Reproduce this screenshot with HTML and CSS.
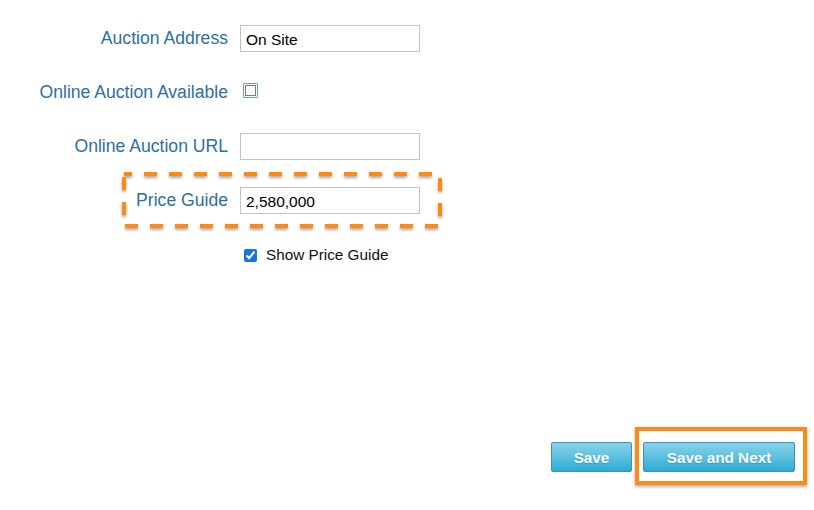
FILE: index.html
```html
<!DOCTYPE html>
<html lang="en">
<head>
<meta charset="utf-8">
<title>Auction Details</title>
<link rel="stylesheet" href="styles.css">
</head>
<body>
<form class="page">
  <div class="rows">
    <div class="row">
      <label class="label" for="addr">Auction Address</label>
      <input class="field" id="addr" type="text" value="On Site">
    </div>
    <div class="row">
      <label class="label" for="online">Online Auction Available</label>
      <input class="check-empty" id="online" type="checkbox">
    </div>
    <div class="row">
      <label class="label" for="url">Online Auction URL</label>
      <input class="field" id="url" type="text" value="">
    </div>
    <div class="row row-highlight">
      <label class="label" for="price">Price Guide</label>
      <input class="field" id="price" type="text" value="2,580,000">
      <svg class="dash-box" width="320" height="56" viewBox="0 0 320 56" aria-hidden="true">
        <rect x="2" y="2" width="316" height="52" fill="none" stroke="#fd8a14" stroke-width="4" stroke-dasharray="13 12" stroke-dashoffset="5"/>
      </svg>
    </div>
    <div class="row">
      <span class="label"></span>
      <label class="check-line"><input class="check-on" type="checkbox" checked><span>Show Price Guide</span></label>
    </div>
  </div>
  <div class="actions">
    <button class="btn btn-save" type="button">Save</button>
    <button class="btn btn-next" type="button">Save and Next</button>
  </div>
</form>
</body>
</html>
```
FILE: styles.css
```css
html, body {
  margin: 0;
  padding: 0;
  background: #ffffff;
}

body {
  font-family: "Liberation Sans", Arial, Helvetica, sans-serif;
  width: 814px;
  height: 510px;
  overflow: hidden;
}

.page {
  display: flex;
  flex-direction: column;
  padding-top: 11px;
}

.rows {
  display: flex;
  flex-direction: column;
}

.row {
  display: flex;
  align-items: center;
  height: 54px;
  position: relative;
}

.label {
  width: 228px;
  flex: none;
  text-align: right;
  font-size: 17.6px;
  color: #2c70a3;
  margin-right: 12px;
  white-space: nowrap;
}

.field {
  box-sizing: border-box;
  width: 180px;
  height: 27px;
  margin: 0;
  border: 1px solid #c3c3c3;
  border-radius: 0;
  padding: 3px 5px 0 5px;
  font-family: "Liberation Sans", Arial, sans-serif;
  font-size: 15.5px;
  color: #000;
  background: #fff;
  outline: none;
}

.check-empty {
  appearance: none;
  -webkit-appearance: none;
  box-sizing: border-box;
  width: 15px;
  height: 15px;
  margin: -3px 0 0 3px;
  border: 1px solid #5d9fd6;
  border-radius: 1px;
  background: #fff;
  box-shadow: inset 0 0 0 1px #ffffff, inset 0 0 0 2px #7a7a7a;
}

.check-line {
  display: flex;
  align-items: center;
  font-size: 15.3px;
  color: #111;
  padding-top: 2px;
}

.check-on {
  width: 13px;
  height: 13px;
  margin: 0 9px 0 4px;
  accent-color: #1b72e8;
}

.dash-box {
  position: absolute;
  left: 122px;
  top: -1px;
  overflow: visible;
  filter: drop-shadow(0 2px 1.5px rgba(0, 0, 0, 0.35));
  pointer-events: none;
}

.actions {
  display: flex;
  justify-content: flex-end;
  gap: 11px;
  margin-top: 161px;
  padding-right: 19px;
}

.btn {
  position: relative;
  box-sizing: border-box;
  height: 30px;
  margin: 0;
  padding: 1px 0 0 0;
  border: 1px solid #3f8fb9;
  border-radius: 2px;
  background: linear-gradient(to bottom, #88d2e8 0%, #5cc0de 50%, #2badd3 100%);
  color: #ffffff;
  font-family: "Liberation Sans", Arial, sans-serif;
  font-weight: bold;
  font-size: 15.3px;
  text-shadow: 0 1px 1px rgba(0, 60, 100, 0.25);
}

.btn-save {
  width: 81px;
}

.btn-next {
  width: 152px;
}

.btn-next::after {
  content: "";
  position: absolute;
  left: -9px;
  right: -13px;
  top: -16px;
  bottom: -14px;
  border: 4px solid #fd8a14;
  box-shadow: 0 2px 3px rgba(0, 0, 0, 0.3);
  pointer-events: none;
}
```
